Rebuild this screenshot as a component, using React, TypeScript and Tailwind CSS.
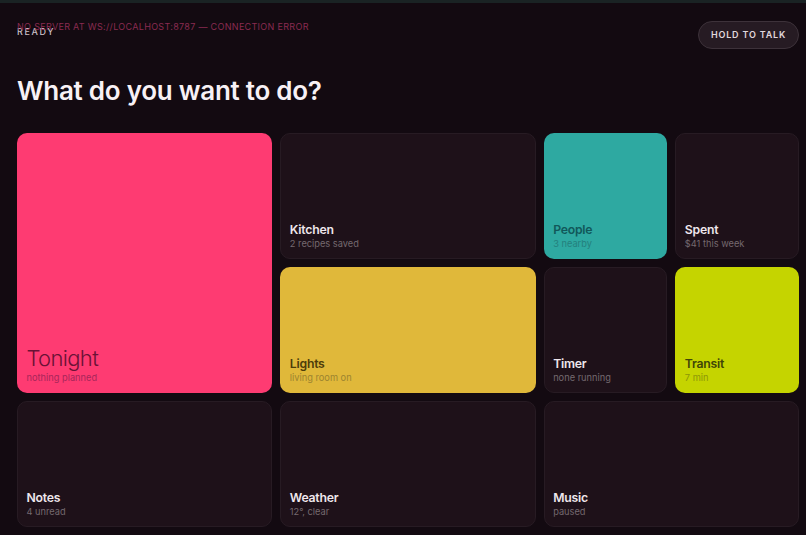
const dark = "bg-[#1e1119] border-[#271b23] text-[#efe7ec]";
const tiles = [
  { t: "Tonight", s: "nothing planned", c: "col-span-2 row-span-2 bg-[#fe3b72] border-transparent text-[#6a1236]", big: true, sub: "text-[#a8265a]" },
  { t: "Kitchen", s: "2 recipes saved", c: `col-span-2 ${dark}`, sub: "text-[#75696f]" },
  { t: "People", s: "3 nearby", c: "bg-[#2ea9a1] border-transparent text-[#11585a]", sub: "text-[#24807d]" },
  { t: "Spent", s: "$41 this week", c: dark, sub: "text-[#75696f]" },
  { t: "Lights", s: "living room on", c: "col-span-2 bg-[#e0b83a] border-transparent text-[#4d3c0a]", sub: "text-[#9c8430]" },
  { t: "Timer", s: "none running", c: dark, sub: "text-[#75696f]" },
  { t: "Transit", s: "7 min", c: "bg-[#c5d400] border-transparent text-[#3f4508]", sub: "text-[#8c9708]" },
  { t: "Notes", s: "4 unread", c: `col-span-2 ${dark}`, sub: "text-[#75696f]" },
  { t: "Weather", s: "12°, clear", c: `col-span-2 ${dark}`, sub: "text-[#75696f]" },
  { t: "Music", s: "paused", c: `col-span-2 ${dark}`, sub: "text-[#75696f]" },
];

export default function App() {
  return (
    <div className="relative h-[535px] w-[806px] overflow-hidden bg-[#130a11] font-['Inter','Liberation_Sans',sans-serif]">
      <div className="h-[3px] bg-[#1a2324]" />
      <p className="absolute left-[17px] top-[21px] text-[9px] leading-[12px] tracking-[0.035em] text-[#8a2a50]">
        NO SERVER AT WS://LOCALHOST:8787 — CONNECTION ERROR
      </p>
      <div className="flex items-start justify-between pl-[17px] pr-[7px] pt-[18px]">
        <span className="mt-[5px] text-[9px] font-medium leading-[12px] tracking-[0.18em] text-[#c9bfc6]">READY</span>
        <button className="h-[28px] w-[101px] rounded-full border border-[#3d323a] bg-[#261b23] text-[9px] font-semibold tracking-[0.09em] text-[#e0d7dd]">
          HOLD TO TALK
        </button>
      </div>
      <h1 className="mt-[25px] pl-[17px] text-[26px] font-semibold leading-[34px] tracking-[-0.01em] text-[#f8f1f5]">
        What do you want to do?
      </h1>
      <div className="mt-[25px] ml-[17px] grid w-[782px] grid-cols-6 auto-rows-[126px] gap-[8px]">
        {tiles.map((x) => (
          <div key={x.t} className={`flex flex-col justify-end rounded-[10px] border px-[8.5px] pb-[8px] ${x.c}`}>
            <div className={x.big ? "text-[22px] font-light leading-[26px] tracking-[-0.03em]" : "text-[12.25px] font-semibold leading-[15px] tracking-[-0.02em]"}>{x.t}</div>
            <div className={`text-[9.25px] leading-[13px] ${x.sub}`}>{x.s}</div>
          </div>
        ))}
      </div>
    </div>
  );
}
